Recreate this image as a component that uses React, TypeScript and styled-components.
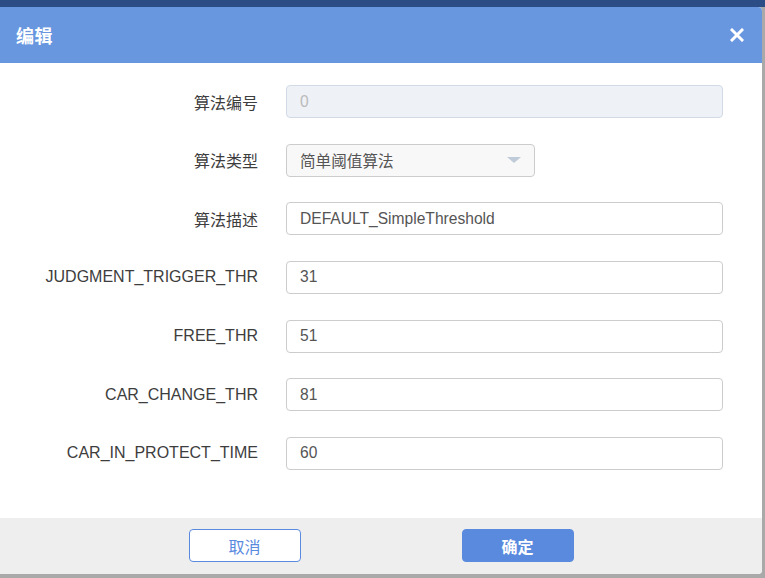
import styled, { createGlobalStyle } from "styled-components";

const GlobalStyle = createGlobalStyle`
  html, body {
    margin: 0;
    padding: 0;
  }
  body {
    width: 765px;
    height: 578px;
    overflow: hidden;
    background: linear-gradient(#2b4c84 0, #2b4c84 7px, #a9a9a9 7px);
    font-family: "Liberation Sans", "Noto Sans CJK SC", sans-serif;
  }
`;

type Field = {
  label: string;
  value: string;
  kind?: "disabled" | "select";
};

const fields: Field[] = [
  { label: "算法编号", value: "0", kind: "disabled" },
  { label: "算法类型", value: "简单阈值算法", kind: "select" },
  { label: "算法描述", value: "DEFAULT_SimpleThreshold" },
  { label: "JUDGMENT_TRIGGER_THR", value: "31" },
  { label: "FREE_THR", value: "51" },
  { label: "CAR_CHANGE_THR", value: "81" },
  { label: "CAR_IN_PROTECT_TIME", value: "60" },
];

/* style */
const Dialog = styled.div`
  margin-top: 7px;
  width: 762px;
  height: 567px;
  display: flex;
  flex-direction: column;
  background: #fff;
  border-radius: 0 4px 4px 0;
  overflow: hidden;
`;

const Header = styled.div`
  height: 56px;
  flex: none;
  display: flex;
  align-items: center;
  justify-content: space-between;
  padding: 0 18px 0 16px;
  background: #6897e0;
  color: #fff;
`;

const Title = styled.h1`
  margin: 0;
  font-size: 18px;
  font-weight: bold;
  letter-spacing: 0.5px;
`;

const Close = styled.button`
  border: none;
  background: none;
  padding: 0;
  width: 14px;
  height: 14px;
  display: flex;
  cursor: pointer;
`;

const Body = styled.div`
  flex: 1;
  padding: 22px 39px 0 0;
  display: flex;
  flex-direction: column;
  gap: 25.67px;
`;

const Row = styled.div`
  display: grid;
  grid-template-columns: 258px 1fr;
  column-gap: 28px;
  align-items: center;
`;

const Label = styled.label`
  text-align: right;
  font-size: 16px;
  color: #3d3d3d;
  white-space: nowrap;
`;

const Input = styled.div<{ $kind?: "disabled" | "select" }>`
  box-sizing: border-box;
  height: 33px;
  width: ${(p) => (p.$kind === "select" ? "249px" : "100%")};
  display: flex;
  align-items: center;
  justify-content: space-between;
  padding: 0 13px 0 13px;
  border-radius: 4px;
  border: 1px solid ${(p) => (p.$kind === "disabled" ? "#d1dbe5" : "#cccccc")};
  background: ${(p) =>
    p.$kind === "disabled" ? "#eef1f6" : p.$kind === "select" ? "#f8f8f8" : "#fff"};
  color: ${(p) => (p.$kind === "disabled" ? "#bbbbbb" : "#555")};
  font-size: 15.6px;
`;

const Arrow = styled.span`
  width: 0;
  height: 0;
  border-left: 7px solid transparent;
  border-right: 7px solid transparent;
  border-top: 6px solid #bfcbd9;
`;

const Footer = styled.div`
  box-sizing: border-box;
  height: 56px;
  flex: none;
  display: flex;
  justify-content: center;
  align-items: flex-start;
  gap: 161px;
  padding-top: 11px;
  background: #eeeeee;
`;

const Button = styled.button<{ $primary?: boolean }>`
  box-sizing: border-box;
  width: 112px;
  height: 33px;
  border-radius: 4px;
  border: 1px solid #5a8ade;
  background: ${(p) => (p.$primary ? "#5a8ade" : "#fff")};
  color: ${(p) => (p.$primary ? "#fff" : "#5a8ade")};
  font-family: "Liberation Sans", "Noto Sans CJK SC", sans-serif;
  font-size: 16px;
  font-weight: ${(p) => (p.$primary ? "bold" : "normal")};
  cursor: pointer;
`;

const App = () => {
  return (
    <>
      <GlobalStyle />
      <Dialog>
        <Header>
          <Title>编辑</Title>
          <Close aria-label="close">
            <svg width="14" height="14" viewBox="0 0 14 14">
              <path
                d="M2 2L12 12M12 2L2 12"
                stroke="#fff"
                strokeWidth="3"
                strokeLinecap="square"
              />
            </svg>
          </Close>
        </Header>
        <Body>
          {fields.map((f) => (
            <Row key={f.label}>
              <Label>{f.label}</Label>
              <Input $kind={f.kind}>
                <span>{f.value}</span>
                {f.kind === "select" && <Arrow />}
              </Input>
            </Row>
          ))}
        </Body>
        <Footer>
          <Button>取消</Button>
          <Button $primary>确定</Button>
        </Footer>
      </Dialog>
    </>
  );
};

export default App;
